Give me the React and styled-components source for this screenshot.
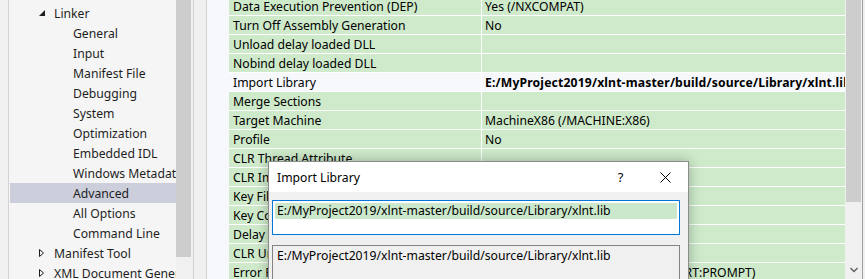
import styled, { createGlobalStyle } from 'styled-components';

const Global = createGlobalStyle`
  html, body {
    margin: 0;
    padding: 0;
    background: #f0f0f0;
    overflow: hidden;
  }
  body {
    font-family: "Noto Sans", "Open Sans", sans-serif;
    font-size: 12.2px;
    color: #1e1e1e;
  }
`

const Window = styled.div`
  position: relative;
  display: flex;
  width: 865px;
  height: 279px;
  overflow: hidden;
  background: #f0f0f0;
`

const Edge = styled.div`
  width: ${({ w }) => w}px;
  flex: none;
  background: #f0f0f0;
  border-right: ${({ line }) => (line ? '1px solid #d4d4d4' : 'none')};
`

const TreePane = styled.div`
  width: 167px;
  flex: none;
  background: #f5f5f5;
  overflow: hidden;
`

const TreeRow = styled.div`
  position: relative;
  height: 20px;
  display: flex;
  align-items: center;
  padding-left: ${({ level }) => (level === 1 ? 44 : 63)}px;
  margin-left: 1px;
  white-space: nowrap;
  background: ${({ selected }) => (selected ? '#cccedb' : 'transparent')};
  color: #1e1e1e;
  &:first-child {
    margin-top: 3px;
  }
`

const Toggle = styled.svg`
  position: absolute;
  left: 28px;
  top: 6px;
`

const Scroll = styled.div`
  width: 17px;
  flex: none;
  position: relative;
  background: #f0f0f0;
`

const Thumb = styled.div`
  margin-left: ${({ inset }) => inset}px;
  width: 15px;
  height: ${({ h }) => h}px;
  background: #cdcdcd;
`

const Arrow = styled.svg`
  position: absolute;
  left: 5px;
  bottom: 6px;
`

const Gutter = styled.div`
  width: 22px;
  flex: none;
  background: #f6f8fc;
`

const Grid = styled.div`
  width: 616px;
  flex: none;
  margin-top: -3px;
`

const Row = styled.div`
  display: grid;
  grid-template-columns: 252px 1fr;
  column-gap: 1px;
  height: 18px;
  border-bottom: 1px solid #ffffff;
  background: #ffffff;
  color: #000;
`

const Cell = styled.div`
  display: flex;
  align-items: center;
  padding-left: ${({ value }) => (value ? 3 : 4)}px;
  background: ${({ current }) => (current ? '#f6f8fc' : '#ceeaca')};
  font-weight: ${({ bold }) => (bold ? 700 : 400)};
  letter-spacing: ${({ bold }) => (bold ? '0.15px' : 'normal')};
  white-space: nowrap;
  overflow: hidden;
`

const Dialog = styled.div`
  position: absolute;
  left: 268px;
  top: 161px;
  width: 419px;
  height: 140px;
  border: 1px solid #8c8c8c;
  background: #f0f0f0;
  box-shadow: 0 0 12px rgba(0, 0, 0, 0.28);
`

const TitleBar = styled.div`
  height: 30px;
  display: flex;
  align-items: center;
  background: #ffffff;
  padding-left: 8px;
  color: #000;
`

const Title = styled.div`
  flex: 1;
`

const TitleButton = styled.div`
  width: 45px;
  height: 30px;
  display: flex;
  align-items: center;
  justify-content: center;
  font-size: 13px;
`

const Body = styled.div`
  padding: 8px 8px 0 3px;
  display: flex;
  flex-direction: column;
  gap: 10px;
`

const Box = styled.div`
  height: 31px;
  border: 1px solid ${({ focused }) => (focused ? '#0078d7' : '#838383')};
  background: ${({ focused }) => (focused ? '#ffffff' : '#f0f0f0')};
  padding: 2px 2px 0;
  color: #000;
`

const Line = styled.div`
  height: 16px;
  line-height: 16px;
  padding-left: 2px;
  background: ${({ marked }) => (marked ? '#cce8cc' : 'transparent')};
  white-space: nowrap;
`

const tree = [
  { label: 'Linker', level: 1, open: true },
  { label: 'General', level: 2 },
  { label: 'Input', level: 2 },
  { label: 'Manifest File', level: 2 },
  { label: 'Debugging', level: 2 },
  { label: 'System', level: 2 },
  { label: 'Optimization', level: 2 },
  { label: 'Embedded IDL', level: 2 },
  { label: 'Windows Metadata', level: 2 },
  { label: 'Advanced', level: 2, selected: true },
  { label: 'All Options', level: 2 },
  { label: 'Command Line', level: 2 },
  { label: 'Manifest Tool', level: 1, open: false },
  { label: 'XML Document Generator', level: 1, open: false },
]

const path = 'E:/MyProject2019/xlnt-master/build/source/Library/xlnt.lib'

const props = [
  ['Data Execution Prevention (DEP)', 'Yes (/NXCOMPAT)'],
  ['Turn Off Assembly Generation', 'No'],
  ['Unload delay loaded DLL', ''],
  ['Nobind delay loaded DLL', ''],
  ['Import Library', path, true],
  ['Merge Sections', ''],
  ['Target Machine', 'MachineX86 (/MACHINE:X86)'],
  ['Profile', 'No'],
  ['CLR Thread Attribute', ''],
  ['CLR Image Type', ''],
  ['Key File', ''],
  ['Key Container', ''],
  ['Delay Sign', ''],
  ['CLR Unmanaged Code Check', ''],
  ['Error Reporting', 'Prompt Immediately (/ERRORREPORT:PROMPT)'],
]

function Expander({ open }) {
  return open ? (
    <Toggle width="8" height="8" viewBox="0 0 8 8">
      <polygon points="7,1 7,7 1,7" fill="#1e1e1e" />
    </Toggle>
  ) : (
    <Toggle width="8" height="10" viewBox="0 0 8 10" style={{ top: 5 }}>
      <polygon points="1.5,1.5 5.5,5 1.5,8.5" fill="none" stroke="#1e1e1e" strokeWidth="1" />
    </Toggle>
  )
}

export default function App() {
  return (
    <>
      <Global />
      <Window>
        <Edge w={8} line />
        <TreePane>
          {tree.map((t) => (
            <TreeRow key={t.label} level={t.level} selected={t.selected}>
              {t.level === 1 && <Expander open={t.open} />}
              {t.label}
            </TreeRow>
          ))}
        </TreePane>
        <Scroll>
          <Thumb h={257} inset={0} />
        </Scroll>
        <Edge w={12} line style={{ borderLeft: '1px solid #d4d4d4' }} />
        <Gutter />
        <Grid>
          {props.map(([name, value, current]) => (
            <Row key={name}>
              <Cell current={current}>{name}</Cell>
              <Cell value current={current} bold={current}>{value}</Cell>
            </Row>
          ))}
        </Grid>
        <Scroll>
          <Thumb h={202} inset={1} />
          <Arrow width="8" height="6" viewBox="0 0 8 6">
            <polyline points="0.5,1 4,4.5 7.5,1" fill="none" stroke="#606060" strokeWidth="1.4" />
          </Arrow>
        </Scroll>
        <Edge w={4} style={{ borderLeft: '1px solid #a0a0a0' }} />

        <Dialog>
          <TitleBar>
            <Title>Import Library</Title>
            <TitleButton>?</TitleButton>
            <TitleButton>
              <svg width="11" height="11" viewBox="0 0 11 11">
                <path d="M0.5 0.5 L10.5 10.5 M10.5 0.5 L0.5 10.5" stroke="#000" strokeWidth="1" />
              </svg>
            </TitleButton>
          </TitleBar>
          <Body>
            <Box focused>
              <Line marked>{path}</Line>
            </Box>
            <Box>
              <Line>{path}</Line>
            </Box>
          </Body>
        </Dialog>
      </Window>
    </>
  )
}
